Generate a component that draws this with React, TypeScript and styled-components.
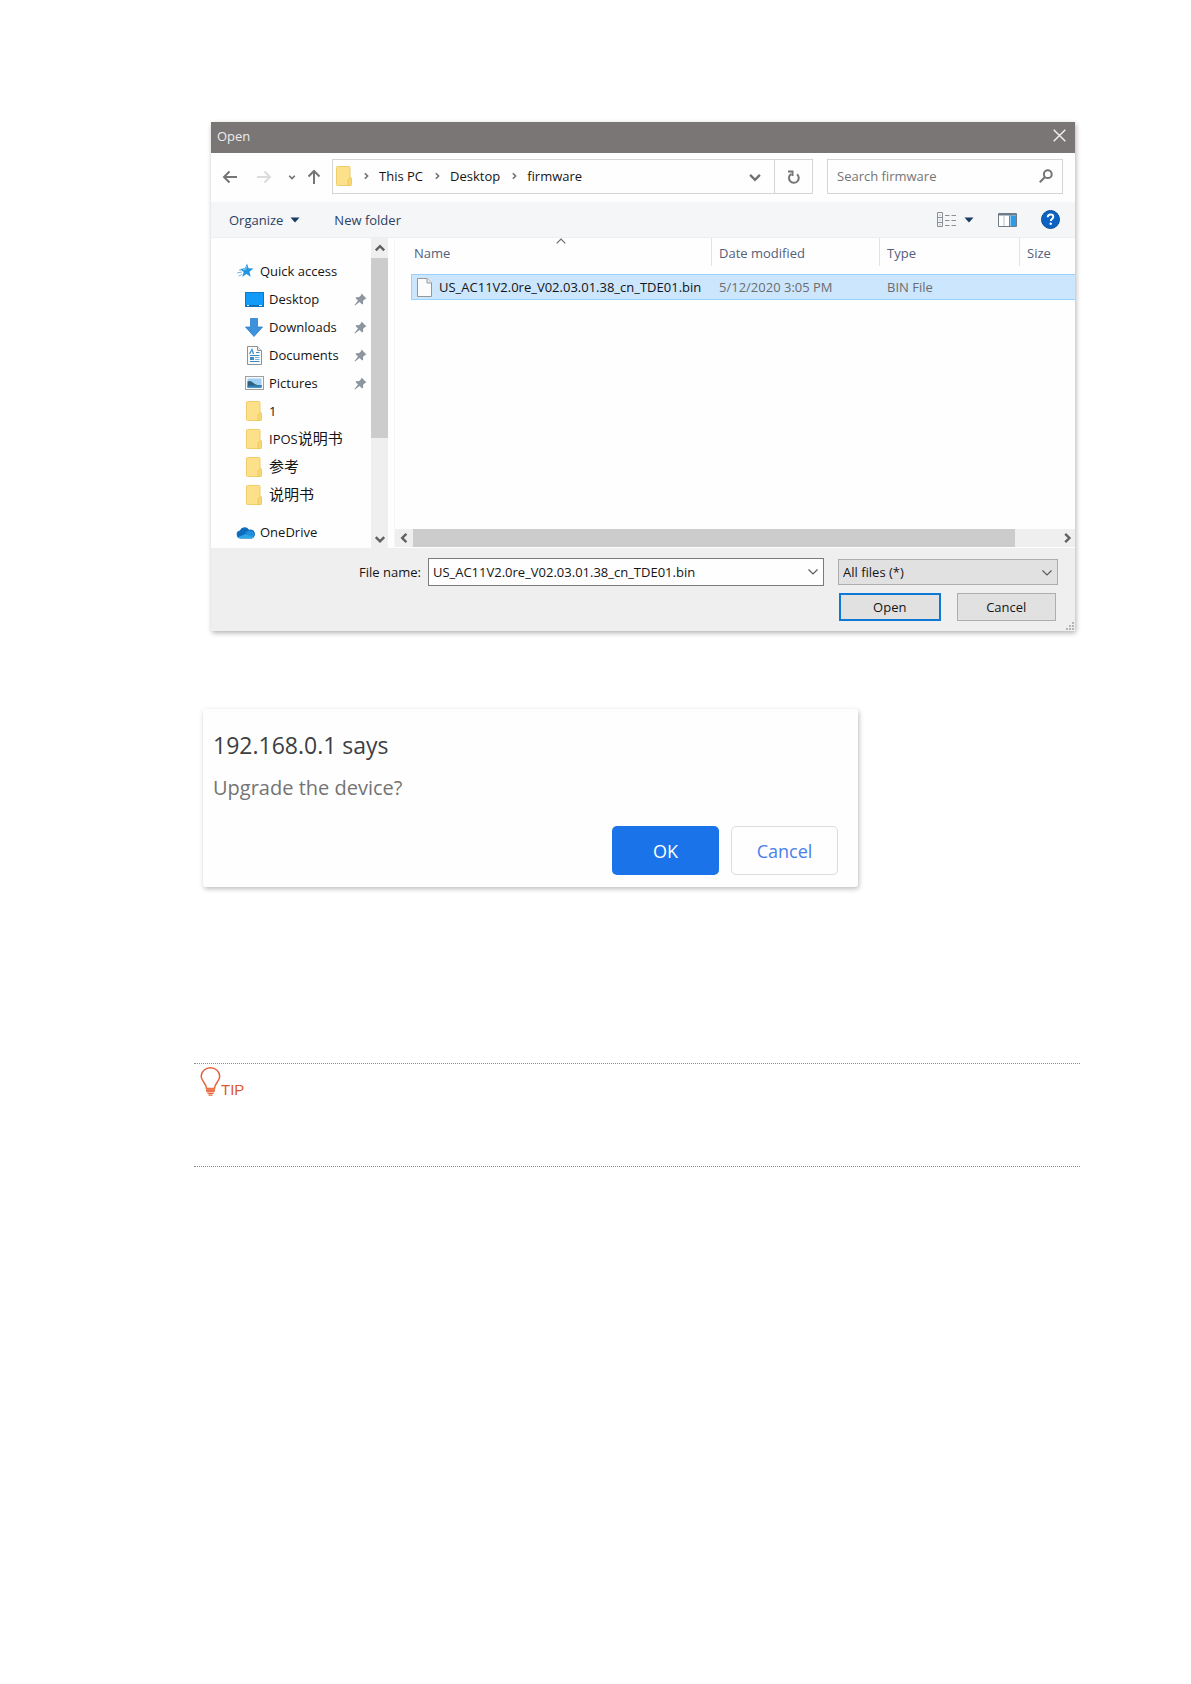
import React from 'react';
import styled, { createGlobalStyle } from 'styled-components';

const GlobalStyle = createGlobalStyle`
  *, *::before, *::after { box-sizing: border-box; }
  body {
    margin: 0;
    background: #ffffff;
    color: #151515;
    font-family: "Open Sans", "Noto Sans", "Noto Sans CJK SC", sans-serif;
    font-size: 13px;
    line-height: 20px;
  }
  button, input, select { font: inherit; color: inherit; margin: 0; }
  svg { display: block; flex: none; }
`;

const Page = styled.main`
  padding: 122px 111px 160px 194px;
`;

/* ---------- File dialog ---------- */

const FileDialog = styled.section`
  margin: 0 5px 0 17px;
  background: #fefefe;
  box-shadow: 1px 2px 5px rgba(0, 0, 0, 0.3);
`;

const TitleBar = styled.header`
  display: flex;
  align-items: center;
  justify-content: space-between;
  height: 31px;
  padding: 0 8px 4px 6px;
  background: #7a7675;
  color: #ececec;
`;

const DialogTitle = styled.h1`
  margin: 0;
  font-size: 13px;
  font-weight: 400;
`;

const IconButton = styled.button<{ $width?: number }>`
  display: flex;
  align-items: center;
  justify-content: center;
  width: ${(p) => p.$width ?? 20}px;
  height: 20px;
  padding: 0;
  border: 0;
  background: transparent;
`;

const NavRow = styled.nav`
  display: flex;
  align-items: center;
  height: 49px;
  padding: 0 12px 2px 9px;
`;

const NavArrows = styled.div`
  display: flex;
  align-items: center;
  width: 112px;
`;

const AddressBar = styled.div`
  display: flex;
  flex: 1;
  height: 35px;
  border: 1px solid #d5d5d5;
`;

const Crumbs = styled.ol`
  display: flex;
  flex: 1;
  align-items: center;
  margin: 0;
  padding: 0 0 2px 3px;
  list-style: none;
`;

const Crumb = styled.li`
  display: flex;
  align-items: center;
`;

const CrumbLink = styled.a`
  color: #151515;
  text-decoration: none;
`;

const CrumbArrow = styled.span`
  display: flex;
  justify-content: center;
  width: 27px;
`;

const AddressButton = styled.button<{ $divided?: boolean }>`
  display: flex;
  align-items: center;
  justify-content: center;
  width: 38px;
  padding: 0;
  border: 0;
  border-left: ${(p) => (p.$divided ? '1px solid #d5d5d5' : '0')};
  background: transparent;
`;

const SearchBox = styled.label`
  display: flex;
  align-items: center;
  width: 236px;
  height: 35px;
  margin-left: 14px;
  padding: 0 9px 2px;
  border: 1px solid #d5d5d5;
`;

const SearchInput = styled.input`
  flex: 1;
  min-width: 0;
  padding: 0;
  border: 0;
  outline: 0;
  background: transparent;
  &::placeholder { color: #757575; opacity: 1; }
`;

const Toolbar = styled.div`
  display: flex;
  align-items: center;
  justify-content: space-between;
  height: 36px;
  padding: 0 15px 0 18px;
  background: #f4f6f8;
  border-bottom: 1px solid #eceef0;
  color: #2d3f63;
`;

const ToolGroup = styled.div<{ $gap: number }>`
  display: flex;
  align-items: center;
  gap: ${(p) => p.$gap}px;
`;

const ToolButton = styled.button`
  display: flex;
  align-items: center;
  gap: 7px;
  padding: 0;
  border: 0;
  background: transparent;
`;

const Body = styled.div`
  display: grid;
  grid-template-columns: 160px 17px 6px 1fr;
`;

const Sidebar = styled.ul`
  margin: 0;
  padding: 19px 0 2px;
  list-style: none;
`;

const SideItem = styled.li<{ $root?: boolean; $spaced?: boolean }>`
  display: flex;
  align-items: center;
  gap: 5px;
  height: 28px;
  margin-top: ${(p) => (p.$spaced ? 9 : 0)}px;
  padding: 0 4px 0 ${(p) => (p.$root ? 24 : 33)}px;
`;

const SideIcon = styled.span`
  display: flex;
  justify-content: center;
  width: 20px;
`;

const SideLink = styled.a`
  flex: 1;
  color: #151515;
  text-decoration: none;
  white-space: nowrap;
`;

const Han = styled.span`
  font-family: "Noto Sans CJK SC", sans-serif;
  font-size: 15px;
  line-height: 16px;
`;

const VerticalScroll = styled.div`
  display: grid;
  grid-template-rows: 20px 1fr 18px;
  background: #efefef;
`;

const HorizontalScroll = styled.div`
  display: grid;
  grid-template-columns: 18px 14fr 1fr 17px;
  height: 18px;
  margin-bottom: 1px;
  background: #efefef;
  & > :last-child { grid-column: 4; }
`;

const ScrollButton = styled.button`
  display: flex;
  align-items: center;
  justify-content: center;
  padding: 0;
  border: 0;
  background: transparent;
`;

const VerticalThumb = styled.div`
  height: 66%;
  background: #cccccc;
`;

const HorizontalThumb = styled.div`
  background: #cccccc;
`;

const Listing = styled.div`
  display: flex;
  flex-direction: column;
  justify-content: space-between;
  border-left: 1px solid #f6f6f6;
`;

const FileTable = styled.table`
  table-layout: fixed;
  width: calc(100% - 16px);
  margin-left: 16px;
  border-spacing: 0;
`;

const Column = styled.col<{ $width?: number }>`
  width: ${(p) => (p.$width ? `${p.$width}px` : 'auto')};
`;

const HeadCell = styled.th`
  position: relative;
  padding: 0 0 8px;
  color: #55607a;
  font-weight: 400;
  text-align: left;
`;

const HeadLabel = styled.span<{ $first?: boolean }>`
  display: block;
  height: 28px;
  padding: 5px 0 3px ${(p) => (p.$first ? 3 : 7)}px;
  border-left: ${(p) => (p.$first ? '0' : '1px solid #e2e2e2')};
`;

const SortMark = styled.span`
  position: absolute;
  top: 0;
  left: 50%;
  transform: translateX(-50%);
`;

const Cell = styled.td`
  height: 26px;
  padding: 0 0 0 8px;
  border: solid #99d1ff;
  border-width: 1px 0;
  background: #cce6fd;
  color: #6d6d6d;
  white-space: nowrap;
`;

const NameCell = styled(Cell)`
  padding-left: 5px;
  border-left-width: 1px;
  color: #151515;
`;

const FileName = styled.span`
  display: flex;
  align-items: center;
  gap: 7px;
`;

const Footer = styled.footer`
  position: relative;
  display: grid;
  grid-template-columns: 1fr 220px;
  gap: 7px 14px;
  padding: 10px 17px 10px 148px;
  background: #efefef;
`;

const NameField = styled.div`
  display: flex;
  align-items: center;
  gap: 7px;
`;

const ComboBox = styled.div`
  display: flex;
  align-items: center;
  flex: 1;
  height: 28px;
  padding: 0 4px;
  border: 1px solid #7a7a7a;
  background: #fefefe;
`;

const ComboInput = styled.input`
  flex: 1;
  min-width: 0;
  padding: 0;
  border: 0;
  outline: 0;
  background: transparent;
`;

const SelectWrap = styled.div`
  position: relative;
  align-self: center;
`;

const TypeSelect = styled.select`
  appearance: none;
  display: block;
  width: 100%;
  height: 26px;
  padding: 0 24px 0 4px;
  border: 1px solid #adadad;
  border-radius: 0;
  background: #e1e1e1;
`;

const SelectArrow = styled.span`
  position: absolute;
  top: 10px;
  right: 5px;
  pointer-events: none;
`;

const Actions = styled.div`
  grid-column: 2;
  display: flex;
  gap: 16px;
  padding: 0 2px 0 1px;
`;

const PushButton = styled.button<{ $primary?: boolean }>`
  flex: 1;
  height: 28px;
  padding: 0;
  border: ${(p) => (p.$primary ? '2px solid #0f78d4' : '1px solid #adadad')};
  background: #e1e1e1;
`;

const Grip = styled.span`
  position: absolute;
  right: 1px;
  bottom: 1px;
`;

/* ---------- Confirm prompt ---------- */

const Prompt = styled.section`
  max-width: 655px;
  margin: 78px 0 0 9px;
  padding: 18px 20px 12px 10px;
  border-radius: 3px;
  background: #fefefe;
  box-shadow: 1px 2px 5px rgba(0, 0, 0, 0.26);
`;

const PromptTitle = styled.h2`
  margin: 0;
  color: #3c4043;
  font-size: 23px;
  font-weight: 400;
  line-height: 36px;
`;

const PromptText = styled.p`
  margin: 8px 0 21px;
  color: #747474;
  font-size: 20px;
  line-height: 34px;
`;

const PromptActions = styled.div`
  display: flex;
  justify-content: flex-end;
  gap: 12px;
`;

const PromptButton = styled.button<{ $primary?: boolean }>`
  width: 107px;
  height: 49px;
  padding: 0;
  border: ${(p) => (p.$primary ? '0' : '1px solid #dadce0')};
  border-radius: 5px;
  background: ${(p) => (p.$primary ? '#1a73e8' : '#fefefe')};
  color: ${(p) => (p.$primary ? '#ffffff' : '#4a80ec')};
  font-size: 18px;
`;

/* ---------- Tip ---------- */

const Tip = styled.aside`
  height: 104px;
  margin-top: 176px;
  padding: 3px 6px;
  border-top: 1px dotted #8c8c8c;
  border-bottom: 1px dotted #8c8c8c;
`;

const TipHeading = styled.h3`
  display: flex;
  align-items: flex-end;
  margin: 0;
  color: #e0592a;
  font-family: "Liberation Sans", Arial, sans-serif;
  font-size: 15px;
  font-weight: 400;
  line-height: 12px;
`;

/* ---------- Icons ---------- */

type ChevronProps = { dir: 'up' | 'down' | 'left' | 'right'; size?: number; stroke?: number; color?: string };

const chevronPaths = {
  up: 'M1.5 7 5 3.5 8.5 7',
  down: 'M1.5 3.5 5 7 8.5 3.5',
  left: 'M7 1.5 3.5 5 7 8.5',
  right: 'M3.5 1.5 7 5 3.5 8.5',
};

const Chevron = ({ dir, size = 10, stroke = 2, color = '#707070' }: ChevronProps) => (
  <svg width={size} height={size} viewBox="0 0 10 10" fill="none" stroke={color} strokeWidth={stroke} aria-hidden="true">
    <path d={chevronPaths[dir]} />
  </svg>
);

const ComboArrow = () => (
  <svg width="12" height="8" viewBox="0 0 12 8" fill="none" stroke="#5c5c5c" strokeWidth="1.2" aria-hidden="true">
    <path d="M1.5 1.5 6 6 10.5 1.5" />
  </svg>
);

const Caret = () => (
  <svg width="10" height="6" viewBox="0 0 10 6" aria-hidden="true">
    <path d="M.5.5h9L5 5.5z" fill="#1b3a63" />
  </svg>
);

const Arrow = ({ angle, color }: { angle: number; color: string }) => (
  <svg width="16" height="16" viewBox="0 0 16 16" fill="none" stroke={color} strokeWidth="2" aria-hidden="true">
    <path d="M15 8H2M7.5 2.5 2 8l5.5 5.5" transform={`rotate(${angle} 8 8)`} />
  </svg>
);

const Folder = () => (
  <svg width="16" height="20" viewBox="0 0 16 20" aria-hidden="true">
    <path d="M.5 1.5q0-1 1-1H13q1 0 1 1V19.500H1.500q-1 0-1-1z" fill="#fde08a" stroke="#efcd6c" />
    <path d="M12 19.500V14l2.500-2.500q1 0 1 1v6q0 1-1 1z" fill="#f8d873" stroke="#e8c255" strokeWidth=".8" />
  </svg>
);

const Star = () => (
  <svg width="17" height="16" viewBox="0 0 17 16" aria-hidden="true">
    <path d="m10 .5 1.5 4.700 5 .3-4 3.200 1.200 5-4.300-2.600-4.200 3 1.500-5-3.700-3L8 5.300z" fill="#2196e0" />
    <path d="m0 10 5-1M1.500 13l3.500-1.500M2 7l2 .3" stroke="#6db9ea" fill="none" />
    <path d="M9.700 3 9 6.300l-3 .5" stroke="#7cc7f5" fill="none" />
  </svg>
);

const DesktopIcon = () => (
  <svg width="19" height="15" viewBox="0 0 19 15" aria-hidden="true">
    <rect x=".5" y=".5" width="18" height="14" fill="#0f9bf7" stroke="#0b78c8" />
    <path d="M1 13h17v1.500H1z" fill="#0c6cb8" />
    <path d="M2 13.500h2M14 13.500h3" stroke="#d8efff" />
  </svg>
);

const DownloadIcon = () => (
  <svg width="18" height="19" viewBox="0 0 18 19" aria-hidden="true">
    <path d="M5.5.5h7V9h5L9 18.500.5 9h5z" fill="#3c92dc" stroke="#2f7fc6" strokeWidth=".8" />
  </svg>
);

const DocumentIcon = () => (
  <svg width="15" height="19" viewBox="0 0 15 19" aria-hidden="true">
    <path d="M.5.5h10l4 4v14H.5z" fill="#fbfbfb" stroke="#8b9299" />
    <path d="M10.5.5v4h4" fill="#e4e8ec" stroke="#8b9299" />
    <path d="M2.500 8 5 3.500 6.500 8M9 6.500h3.500M3 9.500h9.500M3 15.500h9.500" stroke="#3d8cc8" strokeWidth="1.200" fill="none" />
    <path d="M3 11h4v3H3z" fill="#3d8cc8" />
    <path d="M8 11.500h4.500M8 13.500h4.500" stroke="#7aafd6" />
  </svg>
);

const PictureIcon = () => (
  <svg width="19" height="14" viewBox="0 0 19 14" aria-hidden="true">
    <rect x=".5" y=".5" width="18" height="13" fill="#fafafa" stroke="#9b9fa3" />
    <path d="M2.500 2.500h14v9h-14z" fill="#9fd0f3" />
    <path d="M2.500 5.500q3-1.500 6 1.500t8 2v2.500h-14z" fill="#2f5f7c" />
    <path d="M2.500 10q7-1.500 14 0v1.500h-14z" fill="#2c83bd" />
  </svg>
);

const CloudIcon = () => (
  <svg width="19" height="13" viewBox="0 0 19 13" aria-hidden="true">
    <path d="M4.500 12.500a4 4 0 0 1-.7-7.900A5.200 5.200 0 0 1 13 3.700a4.500 4.500 0 0 1 2.700 8.800z" fill="#0f6cbd" />
    <path d="M9 6.500l3.500-1.700q4-.8 5.500 2.200 1.200 4-2.500 5.500z" fill="#1f8fdc" />
    <path d="M1.500 11.500 9.500 8l8 3q-1 1.500-2.500 1.500H4.500q-2 0-3-1z" fill="#2fa4e6" />
  </svg>
);

const Pin = () => (
  <svg width="13" height="13" viewBox="0 0 13 13" aria-hidden="true">
    <path d="m7.500.5 5 5-1.500.5-2 2 .2 2.500-1 1L5.500 9 1 12.500.5 12 4 7.500 1.500 5l1-1 2.500.2 2-2z" fill="#8d969e" />
  </svg>
);

const FileIcon = () => (
  <svg width="15" height="19" viewBox="0 0 15 19" aria-hidden="true">
    <path d="M.5.5H10L14.500 5v13.500H.5z" fill="#fcfcfc" stroke="#979797" />
    <path d="M10 .5V5h4.500" fill="#eee" stroke="#979797" />
  </svg>
);

const Bulb = () => (
  <svg width="21" height="29" viewBox="0 0 21 29" aria-hidden="true">
    <path d="M6.500 21.500C6.500 16 1.200 14.500 1.200 9.500a9.200 8.700 0 0 1 18.500 0C19.700 14.500 14.500 16 14.500 21.500z" fill="none" stroke="#e0643a" strokeWidth="1.500" />
    <path d="M6 21.500h9v2l-1 2H7l-1-2z" fill="#f08058" />
    <path d="M6 24h9M7.500 26.500h6M8.500 28.200h4" stroke="#e0643a" strokeWidth="1.200" />
  </svg>
);

/* ---------- Data ---------- */

type Entry = { text?: string; han?: string; icon: React.ReactNode; pinned?: boolean; root?: boolean; spaced?: boolean };

const entries: Entry[] = [
  { text: 'Quick access', icon: <Star />, root: true },
  { text: 'Desktop', icon: <DesktopIcon />, pinned: true },
  { text: 'Downloads', icon: <DownloadIcon />, pinned: true },
  { text: 'Documents', icon: <DocumentIcon />, pinned: true },
  { text: 'Pictures', icon: <PictureIcon />, pinned: true },
  { text: '1', icon: <Folder /> },
  { text: 'IPOS', han: '说明书', icon: <Folder /> },
  { han: '参考', icon: <Folder /> },
  { han: '说明书', icon: <Folder /> },
  { text: 'OneDrive', icon: <CloudIcon />, root: true, spaced: true },
];

const crumbs = ['This PC', 'Desktop', 'firmware'];
const fileName = 'US_AC11V2.0re_V02.03.01.38_cn_TDE01.bin';

export default function App() {
  return (
    <>
      <GlobalStyle />
      <Page>
        <FileDialog>
          <TitleBar>
            <DialogTitle>Open</DialogTitle>
            <IconButton $width={16} aria-label="Close">
              <svg width="13" height="13" viewBox="0 0 13 13" stroke="#f2f2f2" strokeWidth="1.400" aria-hidden="true">
                <path d="m.7.7 11.600 11.600M12.300.7.7 12.300" />
              </svg>
            </IconButton>
          </TitleBar>

          <NavRow>
            <NavArrows>
              <IconButton aria-label="Back"><Arrow angle={0} color="#757575" /></IconButton>
              <IconButton $width={48} aria-label="Forward" disabled><Arrow angle={180} color="#dcdcdc" /></IconButton>
              <IconButton $width={8} aria-label="Recent locations"><Chevron dir="down" size={8} /></IconButton>
              <IconButton $width={36} aria-label="Up"><Arrow angle={90} color="#757575" /></IconButton>
            </NavArrows>
            <AddressBar>
              <Crumbs>
                <Crumb><Folder /></Crumb>
                {crumbs.map((name) => (
                  <Crumb key={name}>
                    <CrumbArrow><Chevron dir="right" size={8} /></CrumbArrow>
                    <CrumbLink href="#">{name}</CrumbLink>
                  </Crumb>
                ))}
              </Crumbs>
              <AddressButton aria-label="Previous locations"><Chevron dir="down" size={14} stroke={1.7} /></AddressButton>
              <AddressButton $divided aria-label="Refresh">
                <svg width="13" height="14" viewBox="0 0 13 14" fill="none" stroke="#757575" strokeWidth="2" aria-hidden="true">
                  <path d="M10 4.200A4.900 4.900 0 1 1 4 4M1 1.500h4.500V6" />
                </svg>
              </AddressButton>
            </AddressBar>
            <SearchBox>
              <SearchInput type="text" placeholder="Search firmware" aria-label="Search firmware" />
              <svg width="14" height="14" viewBox="0 0 14 14" fill="none" stroke="#757575" strokeWidth="2" aria-hidden="true">
                <circle cx="8.800" cy="5.200" r="3.900" />
                <path d="M6 8 .8 13.200" />
              </svg>
            </SearchBox>
          </NavRow>

          <Toolbar>
            <ToolGroup $gap={34}>
              <ToolButton>Organize<Caret /></ToolButton>
              <ToolButton>New folder</ToolButton>
            </ToolGroup>
            <ToolGroup $gap={24}>
              <ToolButton aria-label="Change your view">
                <svg width="20" height="16" viewBox="0 0 20 16" fill="none" stroke="#8a8f94" aria-hidden="true">
                  <path d="M.5.5h5v14h-5zM.5 5.500h5M.5 10.500h5M2.500 3.200h1M2.500 8h1M2.500 12.800h1" />
                  <path d="M8 3.500h4.500M14.500 3.500H19M8 8.500h4.500M14.500 8.500H19M8 13.500h4.500M14.500 13.500H19" />
                </svg>
                <Caret />
              </ToolButton>
              <ToolButton aria-label="Show the preview pane">
                <svg width="19" height="14" viewBox="0 0 19 14" aria-hidden="true">
                  <path d="M.5.5h18v13H.5z" fill="#fff" stroke="#6f7c88" />
                  <path d="M1 1h17v1.500H1z" fill="#6f7c88" />
                  <path d="M11 2.500h7V13h-7z" fill="#2c9be8" />
                  <path d="M6 2.500V13" stroke="#b8c0c8" />
                  <path d="M12.500 3v10" stroke="#8fcaf4" />
                </svg>
              </ToolButton>
              <ToolButton aria-label="Get help">
                <svg width="19" height="19" viewBox="0 0 19 19" aria-hidden="true">
                  <circle cx="9.500" cy="9.500" r="9" fill="#0a63c4" stroke="#0b4d98" />
                  <path d="M6.700 7.200q.1-2.700 2.900-2.700 2.700 0 2.700 2.300 0 1.300-1.500 2.300-1 .7-1 2" fill="none" stroke="#fff" strokeWidth="1.900" />
                  <circle cx="9.700" cy="13.800" r="1.200" fill="#fff" />
                </svg>
              </ToolButton>
            </ToolGroup>
          </Toolbar>

          <Body>
            <Sidebar>
              {entries.map((e) => (
                <SideItem key={`${e.text ?? ''}${e.han ?? ''}`} $root={e.root} $spaced={e.spaced}>
                  <SideIcon>{e.icon}</SideIcon>
                  <SideLink href="#">{e.text}{e.han && <Han lang="zh-CN">{e.han}</Han>}</SideLink>
                  {e.pinned && <Pin />}
                </SideItem>
              ))}
            </Sidebar>
            <VerticalScroll>
              <ScrollButton aria-label="Scroll up"><Chevron dir="up" size={12} color="#606060" /></ScrollButton>
              <div><VerticalThumb /></div>
              <ScrollButton aria-label="Scroll down"><Chevron dir="down" size={12} color="#606060" /></ScrollButton>
            </VerticalScroll>
            <div />
            <Listing>
              <FileTable>
                <colgroup>
                  <Column $width={300} />
                  <Column $width={168} />
                  <Column $width={140} />
                  <Column />
                </colgroup>
                <thead>
                  <tr>
                    <HeadCell scope="col">
                      <HeadLabel $first>Name</HeadLabel>
                      <SortMark>
                        <svg width="10" height="6" viewBox="0 0 10 6" fill="none" stroke="#6b6b6b" strokeWidth="1.200" aria-hidden="true">
                          <path d="M.7 5.300 5 1l4.300 4.300" />
                        </svg>
                      </SortMark>
                    </HeadCell>
                    <HeadCell scope="col"><HeadLabel>Date modified</HeadLabel></HeadCell>
                    <HeadCell scope="col"><HeadLabel>Type</HeadLabel></HeadCell>
                    <HeadCell scope="col"><HeadLabel>Size</HeadLabel></HeadCell>
                  </tr>
                </thead>
                <tbody>
                  <tr>
                    <NameCell><FileName><FileIcon />{fileName}</FileName></NameCell>
                    <Cell>5/12/2020 3:05 PM</Cell>
                    <Cell>BIN File</Cell>
                    <Cell />
                  </tr>
                </tbody>
              </FileTable>
              <HorizontalScroll>
                <ScrollButton aria-label="Scroll left"><Chevron dir="left" size={12} color="#606060" /></ScrollButton>
                <HorizontalThumb />
                <ScrollButton aria-label="Scroll right"><Chevron dir="right" size={12} color="#606060" /></ScrollButton>
              </HorizontalScroll>
            </Listing>
          </Body>

          <Footer>
            <NameField>
              <label htmlFor="file-name">File name:</label>
              <ComboBox>
                <ComboInput id="file-name" type="text" defaultValue={fileName} />
                <IconButton $width={12} aria-label="Recent file names"><ComboArrow /></IconButton>
              </ComboBox>
            </NameField>
            <SelectWrap>
              <TypeSelect aria-label="File type" defaultValue="all">
                <option value="all">All files (*)</option>
              </TypeSelect>
              <SelectArrow><ComboArrow /></SelectArrow>
            </SelectWrap>
            <Actions>
              <PushButton $primary>Open</PushButton>
              <PushButton>Cancel</PushButton>
            </Actions>
            <Grip>
              <svg width="8" height="8" viewBox="0 0 8 8" fill="#b5b5b5" aria-hidden="true">
                <path d="M6 0h2v2H6zM3 3h2v2H3zM6 3h2v2H6zM0 6h2v2H0zM3 6h2v2H3zM6 6h2v2H6z" />
              </svg>
            </Grip>
          </Footer>
        </FileDialog>

        <Prompt>
          <PromptTitle>192.168.0.1 says</PromptTitle>
          <PromptText>Upgrade the device?</PromptText>
          <PromptActions>
            <PromptButton $primary>OK</PromptButton>
            <PromptButton>Cancel</PromptButton>
          </PromptActions>
        </Prompt>

        <Tip>
          <TipHeading><Bulb />TIP</TipHeading>
        </Tip>
      </Page>
    </>
  );
}
